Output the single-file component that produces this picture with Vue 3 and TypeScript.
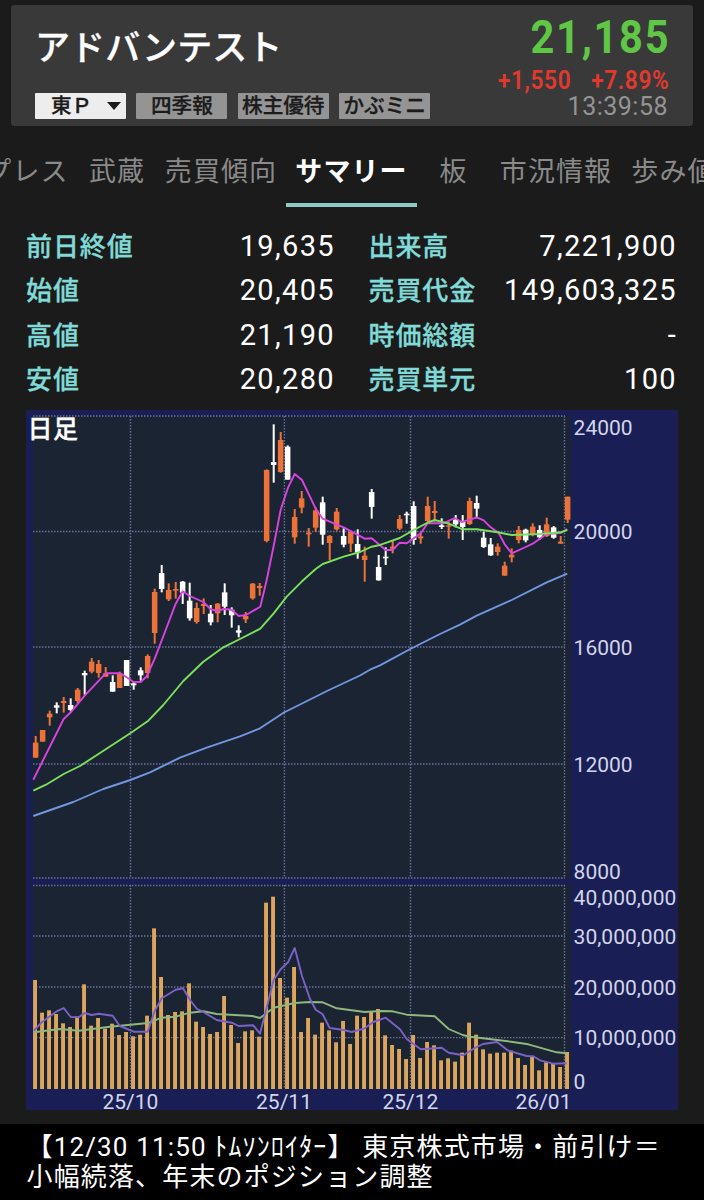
<script setup lang="ts">
interface Candle { x: number; color: string; high: number; low: number; top: number; height: number }
interface Tab { label: string; width: string; active?: boolean }

const tags: string[] = ['四季報', '株主優待', 'かぶミニ']

const tabs: Tab[] = [
  { label: 'プレス', width: 'w-press' },
  { label: '武蔵', width: 'w-musashi' },
  { label: '売買傾向', width: 'w-trend' },
  { label: 'サマリー', width: 'w-summary', active: true },
  { label: '板', width: 'w-board' },
  { label: '市況情報', width: 'w-market' },
  { label: '歩み値', width: 'w-ticks' },
]

const leftStats = [
  ['前日終値', '19,635'],
  ['始値', '20,405'],
  ['高値', '21,190'],
  ['安値', '20,280'],
]
const rightStats = [
  ['出来高', '7,221,900'],
  ['売買代金', '149,603,325'],
  ['時価総額', '-'],
  ['売買単元', '100'],
]

// Each session: direction (u = up, d = down), then high, body top, body bottom, low,
// measured in thirds of a pixel below the top edge of the chart drawing.
const sessions = `u 978 998 1043 1043|u 960 960 995 995|u 902 911 922 947|d 877 886 893 910|u 861 873 879 908
d 865 885 900 904|u 834 839 873 880|d 782 789 796 854|u 744 755 785 790|u 750 762 789 803|u 771 790 800 800
d 796 816 845 845|u 785 790 834 834|d 750 750 828 828|d 816 820 826 839|d 772 781 796 812|u 733 738 789 805
u 536 546 669 701|d 465 489 537 547|u 520 540 568 573|u 516 537 542 566|d 513 515 548 582|d 518 572 625 632
u 578 594 636 641|u 565 582 588 612|d 585 611 637 646|u 579 581 610 637|d 520 547 590 615|d 592 599 616 653
d 646 661 668 682|u 606 618 628 639|u 519 521 565 569|u 519 528 534 557|u 178 180 393 397|d 43 156 165 218
u 66 90 186 188|d 106 110 209 209|u 297 321 382 401|u 243 265 293 310|u 354 368 373 410|u 292 301 353 365
d 260 277 374 404|u 375 378 399 451|u 294 305 358 362|d 355 378 404 412|u 362 366 401 426|d 358 402 428 446
u 410 437 450 515|d 237 246 291 326|d 435 471 511 512|d 412 440 445 465|u 392 410 416 430|u 315 327 356 360
d 305 311 316 341|d 274 288 390 404|u 365 379 385 401|u 260 288 333 336|u 273 303 309 335|d 325 346 351 357
u 336 346 350 386|d 315 329 343 352|d 315 336 351 390|u 263 273 342 345|d 257 279 296 325|d 365 383 411 414
d 384 403 436 438|u 400 410 426 437|u 455 467 497 497|u 415 434 442 457|u 348 360 390 400|d 356 359 391 397
u 340 350 374 379|d 346 360 382 389|u 323 343 378 381|d 348 352 383 386|u 378 395 401 401|u 260 260 329 339`

const candles: Candle[] = sessions.split(/[|\n]/).map((entry, i) => {
  const [dir, ...rest] = entry.trim().split(' ')
  const [high, top, bottom, low] = rest.map((v) => Number(v) / 3 + 410)
  return {
    x: 35.6 + i * 7,
    color: dir === 'u' ? '#ec7237' : '#ffffff',
    high,
    low,
    top,
    height: bottom - top,
  }
})

// Height of each volume bar, in thirds of a pixel above the base line.
const volumes: number[] = [
  327, 229, 236, 225, 197, 186, 217, 314, 190, 213, 181, 196, 162, 171, 158, 163, 220, 482, 336, 222,
  231, 233, 317, 202, 186, 165, 171, 279, 192, 138, 173, 176, 157, 559, 577, 333, 274, 366, 171, 213,
  163, 199, 176, 140, 204, 135, 220, 216, 232, 240, 161, 132, 120, 90, 162, 93, 141, 131, 86, 92,
  82, 109, 199, 163, 119, 106, 109, 109, 115, 93, 72, 99, 56, 80, 76, 66, 111,
].map((v) => v / 3)

const gridRows: number[] = [416, 531.5, 647, 764, 878, 885.5, 936, 987, 1037.6]
const gridColumns: number[] = [130.5, 284.4, 410.5, 564.5]

const priceLabels: [string, number][] = [
  ['24000', 427.7], ['20000', 531.7], ['16000', 647.5], ['12000', 764.5], ['8000', 871.3],
  ['40,000,000', 897.3], ['30,000,000', 936.3], ['20,000,000', 987.3], ['10,000,000', 1037.6], ['0', 1081.3],
]
const dateLabels: [string, number][] = [['25/10', 130.4], ['25/11', 284], ['25/12', 410.4], ['26/01', 543.5]]

const shortAverage =
  '33.3,779.7 63.7,719 70.7,712.3 84.7,695.7 105.7,673.3 120.3,673.3 126.7,677.3 133.3,681.7 140.7,682 146.7,676.3 154.7,658.7 165.7,630 175.7,603.7 182.7,591.3 189.7,596 203.3,602 210.7,609.3 216.7,610.7 224,609 231.7,609.7 238.7,616 246,615 260.3,606.7 266.7,580 273.7,545.7 280.7,509.7 288,487.7 294.7,474 302,480 315.7,508.7 322.7,518.7 336.7,524.7 343.7,527.3 364.7,538.7 371.7,538.3 385.7,550 392.7,550 399.7,542.7 406.7,543.3 420.7,533.3 427.7,523.3 443.3,523.3 454.7,518 461.7,522 470,519.7 476.7,517.3 483.7,520.3 490.7,527.3 498.7,533 504.7,544.3 511.7,553.3 525.7,547 532.7,543.7 546.7,534 560.7,533 567.3,529'
const midAverage =
  '33.3,790.7 46,784.7 63.7,774 80,766 100,753 130.3,733.3 148.3,720.7 163.3,705 183.3,681 203.3,661.7 223.3,647.3 240,639 260.3,628.7 273.7,613.3 286.7,596.7 302,581.3 315.7,569 322.7,564 343.7,556.7 360,552 371.7,546.7 378.7,545.3 399.7,538 413.7,530 427.7,522.7 434.7,520 448.7,523.7 462.7,529.3 476.7,529.3 497.7,532.3 511.7,535 539.7,534 560.7,532.3 567.3,530'
const longAverage =
  '33.3,816 73.3,802 103.3,789 130.3,780 150,772.3 180,757.7 206.7,747.7 240,736.3 260,728.3 284,712.5 328,690.5 360,675.5 370,669.7 380,665.3 410.3,649 440,634 460,624.7 476.7,615.7 511.7,600 546.7,582.3 567.3,573.7'
const volumeShort =
  '34,1030.7 42,1022 56.7,1011.3 63.7,1008 70.7,1017 78.7,1017.3 84.7,1013 91.7,1015 98.7,1013.7 112.7,1015.7 119.7,1026 133.7,1031.7 147.7,1031.7 154.7,1011 161.7,998.3 175.7,989.7 183,988.3 190,1000 197,1009 203,1011.7 216.7,1020 231.7,1022.7 238.7,1026 253.3,1025.3 260,1033.7 273.7,979.7 280.7,969.3 288,962.3 294.7,948 302,976 310,999 315.7,1009.7 322.7,1014.3 329.7,1028 343.7,1030 351.7,1032 364.7,1028.3 373.3,1022 385.7,1017.7 400,1029.3 406.7,1039 420.7,1049.3 441.7,1047.7 448.7,1052.7 463.3,1055.3 476,1047.3 483,1044 497,1042 508.3,1050.7 526.7,1056 533.3,1056.3 540,1060.3 553.3,1063.7 566.7,1063.3'
const volumeLong =
  '34,1032.3 60,1029 78.7,1030.7 110,1026.7 148.3,1023 161.7,1017.7 175.7,1016.7 190,1012.7 203.3,1011.3 216.7,1014 252.3,1016 260,1018 273.7,1007.7 294.7,1003 310,1002 322.7,1002.3 336.7,1008.3 364.7,1012 380,1011 392.7,1011.3 406.7,1014.7 434.7,1016.3 448.7,1029 462.7,1035 470,1036.7 483,1038.3 511,1041.7 528.3,1044.3 556.7,1052.3 566.7,1053.3'
</script>

<template>
  <main class="screen">
    <header class="card">
      <div class="identity">
        <h1 class="name">アドバンテスト</h1>
        <div class="tags">
          <span class="tag market">東Ｐ<svg class="caret" viewBox="0 0 14 8"><path d="M0 0H14L7 8Z" /></svg></span>
          <span v-for="tag in tags" :key="tag" class="tag">{{ tag }}</span>
        </div>
      </div>
      <div class="quote">
        <div class="price">21,185</div>
        <div class="change"><span>+1,550</span><span class="percent">+7.89%</span></div>
        <div class="time">13:39:58</div>
      </div>
    </header>

    <nav class="tabs">
      <div v-for="tab in tabs" :key="tab.label" :class="['tab', tab.width, { active: tab.active }]">{{ tab.label }}</div>
    </nav>

    <section class="stats">
      <dl class="column left">
        <div v-for="[label, value] in leftStats" :key="label" class="stat"><dt>{{ label }}</dt><dd>{{ value }}</dd></div>
      </dl>
      <dl class="column right">
        <div v-for="[label, value] in rightStats" :key="label" class="stat"><dt>{{ label }}</dt><dd>{{ value }}</dd></div>
      </dl>
    </section>

    <svg class="chart" viewBox="26 410 651.5 700">
      <rect x="26" y="410" width="652" height="700" fill="#191f54" />
      <rect x="33" y="415.5" width="538" height="463" fill="#1b2433" />
      <rect x="33" y="884.5" width="538" height="204.5" fill="#1b2433" />
      <g class="grid">
        <line v-for="y in gridRows" :key="y" x1="33" x2="565" :y1="y" :y2="y" />
        <template v-for="x in gridColumns" :key="x">
          <line :x1="x" :x2="x" y1="416" y2="878" />
          <line :x1="x" :x2="x" y1="885" y2="1089" />
        </template>
      </g>
      <g v-for="c in candles" :key="c.x" :fill="c.color">
        <rect :x="c.x - 0.9" :y="c.high" width="2" :height="c.low - c.high" />
        <rect :x="c.x - 2.7" :y="c.top" width="5.5" :height="c.height" />
      </g>
      <polyline class="line" :points="longAverage" stroke="#7396e0" />
      <polyline class="line" :points="shortAverage" stroke="#d944df" />
      <polyline class="line" :points="midAverage" stroke="#7be05a" />
      <rect v-for="(v, i) in volumes" :key="i" :x="33.1 + i * 7" :y="1089 - v" width="3.9" :height="v" fill="#dda55c" />
      <polyline class="line" :points="volumeLong" stroke="#90b77c" />
      <polyline class="line" :points="volumeShort" stroke="#7a62c6" />
      <text class="period" x="27.5" y="438">日足</text>
      <text v-for="[label, y] in priceLabels" :key="label" class="axis" x="573.6" :y="y + 7.3">{{ label }}</text>
      <text v-for="[label, x] in dateLabels" :key="label" class="axis date" :x="x" y="1109">{{ label }}</text>
    </svg>

    <footer class="news">
      <div>【12/30 11:50 ﾄﾑｿﾝﾛｲﾀｰ】 東京株式市場・前引け＝</div>
      <div>小幅続落、年末のポジション調整</div>
    </footer>
  </main>
</template>

<style>
body {
  background: #1b1b1b;
}
</style>

<style scoped>
.screen {
  width: 704px;
  height: 1200px;
  display: flex;
  flex-direction: column;
  overflow: hidden;
  background: #1b1b1b;
  color: #fff;
  font-family: Roboto, "Noto Sans CJK JP", sans-serif;
}
.card {
  box-sizing: border-box;
  flex: none;
  width: 682px;
  height: 121px;
  margin: 5px 0 0 11px;
  padding: 0 25px 0 24px;
  display: flex;
  justify-content: space-between;
  background: #393939;
  border-radius: 3px;
}
.name {
  margin: 19px 0 0;
  height: 50px;
  font-size: 35px;
  line-height: 50px;
  font-weight: 500;
  letter-spacing: 0.1px;
  -webkit-text-stroke: 0.3px currentColor;
}
.tags {
  display: flex;
  gap: 10.4px;
  margin-top: 18.5px;
}
.tag {
  box-sizing: border-box;
  width: 91px;
  height: 26.5px;
  border-radius: 1px;
  background: #949494;
  color: #1b1b1b;
  font-size: 20.6px;
  line-height: 26px;
  font-weight: 500;
  text-align: center;
  white-space: nowrap;
  -webkit-text-stroke: 0.3px currentColor;
}
.market {
  display: flex;
  align-items: center;
  justify-content: space-between;
  padding: 0 5px 0 16px;
  background: #ededed;
}
.caret {
  width: 14px;
  height: 8px;
  fill: #1b1b1b;
}
.quote {
  text-align: right;
  white-space: nowrap;
}
.price {
  height: 63px;
  line-height: 64px;
  font-size: 47px;
  font-weight: 700;
  letter-spacing: 1.9px;
  margin-right: -1.9px;
  transform: scaleX(0.885);
  transform-origin: right;
  color: #60c645;
}
.change {
  display: flex;
  justify-content: flex-end;
  gap: 22px;
  height: 26px;
  line-height: 26px;
  font-size: 25px;
  font-weight: 600;
  letter-spacing: 0.7px;
  margin-right: -1px;
  transform: scaleX(0.905);
  transform-origin: right;
  color: #e2392f;
}
.time {
  line-height: 26px;
  font-size: 25px;
  letter-spacing: 0.5px;
  color: #949494;
}
.tabs {
  flex: none;
  display: flex;
  height: 81px;
  margin-left: -23px;
  width: 748px;
}
.tab {
  flex: none;
  box-sizing: border-box;
  height: 80.5px;
  padding-top: 26px;
  line-height: 40px;
  font-size: 27px;
  letter-spacing: 1.1px;
  text-align: center;
  color: #8a8a8a;
  white-space: nowrap;
}
.active {
  color: #fff;
  font-weight: 700;
  border-bottom: 4px solid #8fc9c5;
}
.w-press { width: 99px; }
.w-musashi { width: 82px; }
.w-trend { width: 126px; }
.w-summary { width: 131px; margin: 0 1px 0 2px; }
.w-board { width: 71px; }
.w-market { width: 134px; }
.w-ticks { width: 101px; }
.stats {
  flex: none;
  display: flex;
  justify-content: space-between;
  height: 185px;
  margin-top: 18px;
  padding: 0 27px 0 26px;
}
.column {
  margin: 0;
}
.left { width: 309px; }
.right { width: 308.5px; }
.stat {
  display: flex;
  justify-content: space-between;
  height: 44.4px;
  line-height: 44.4px;
}
dt {
  font-size: 26px;
  font-weight: 500;
  letter-spacing: 0.9px;
  color: #80dad7;
  -webkit-text-stroke: 0.3px currentColor;
}
dd {
  margin: 0;
  line-height: 42.6px;
  font-size: 29px;
  letter-spacing: 1.35px;
}
.chart {
  flex: none;
  display: block;
  width: 651.5px;
  height: 700px;
  margin: 0 0 14px 26px;
}
.grid line {
  stroke: #69719a;
  stroke-width: 1.4;
  stroke-dasharray: 1.5 1.5;
}
.line {
  fill: none;
  stroke-width: 1.9;
  stroke-linejoin: round;
}
.axis {
  font-size: 21px;
  fill: #d3d5ea;
}
.date {
  text-anchor: middle;
}
.period {
  font-size: 25px;
  font-weight: 500;
  letter-spacing: 0.5px;
  fill: #fff;
  stroke: #fff;
  stroke-width: 0.3px;
}
.news {
  flex: 1;
  padding: 8px 0 0 26.5px;
  background: #000;
  font-size: 26px;
  line-height: 30px;
  letter-spacing: 1.15px;
  white-space: pre;
}
</style>
